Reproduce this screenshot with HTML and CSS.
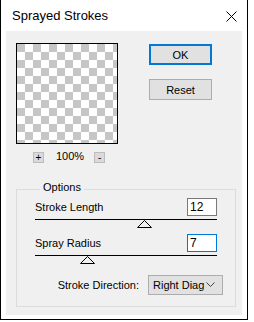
FILE: index.html
```html
<!DOCTYPE html>
<html lang="en">
<head>
    <meta charset="UTF-8">
    <title>Sprayed Strokes</title>
    <link rel="stylesheet" href="styles.css">
</head>
<body>
    <div class="dialog">
        <!-- Title bar -->
        <div class="titlebar">
            <span class="title">Sprayed Strokes</span>
            <svg class="close" width="11" height="11" viewBox="0 0 11 11">
                <path d="M0.5 0.5L10.5 10.5M10.5 0.5L0.5 10.5" stroke="#000" stroke-width="1" fill="none"/>
            </svg>
        </div>

        <div class="client">
            <div class="top">
                <!-- Preview with zoom controls -->
                <div class="preview-col">
                    <div class="preview"></div>
                    <div class="zoom">
                        <button class="zoom-btn">+</button>
                        <span class="zoom-level">100%</span>
                        <button class="zoom-btn">-</button>
                    </div>
                </div>

                <div class="actions">
                    <button class="btn btn-default">OK</button>
                    <button class="btn">Reset</button>
                </div>
            </div>

            <!-- Options group -->
            <fieldset class="options">
                <legend>Options</legend>

                <div class="field">
                    <label>Stroke Length</label>
                    <input class="num" type="text" value="12">
                </div>
                <div class="slider">
                    <svg class="thumb" style="margin-left: 102px" width="15" height="8" viewBox="0 0 15 8">
                        <path d="M7.5 0.5L14.5 7.5H0.5Z" fill="#f0f0f0" stroke="#000" stroke-width="1"/>
                    </svg>
                </div>

                <div class="field">
                    <label>Spray Radius</label>
                    <input class="num num-focus" type="text" value="7">
                </div>
                <div class="slider">
                    <svg class="thumb" style="margin-left: 45px" width="15" height="8" viewBox="0 0 15 8">
                        <path d="M7.5 0.5L14.5 7.5H0.5Z" fill="#f0f0f0" stroke="#000" stroke-width="1"/>
                    </svg>
                </div>

                <div class="field field-select">
                    <label>Stroke Direction:</label>
                    <div class="select">
                        <span>Right Diag</span>
                        <svg width="9" height="6" viewBox="0 0 9 6">
                            <path d="M0.5 0.5L4.5 4.5L8.5 0.5" stroke="#444" stroke-width="1" fill="none"/>
                        </svg>
                    </div>
                </div>
            </fieldset>
        </div>
    </div>
</body>
</html>
```

FILE: styles.css
```css
/* Page and dialog frame */
body {
    margin: 0;
    background-color: #fff;
    color: #000;
    font-family: "Liberation Sans", Arial, sans-serif;
    font-size: 11px;
}

.dialog {
    width: 248px;
    height: 320px;
    box-sizing: border-box;
    border: 1px solid #000;
    border-top: none;
    background-color: #fff;
    display: flex;
    flex-direction: column;
}

/* Title bar */
.titlebar {
    flex: none;
    height: 31px;
    display: flex;
    align-items: center;
    padding: 0 10px 0 11px;
}

.title {
    flex: 1;
    font-size: 13px;
}

.close {
    margin-top: 1px;
}

/* Grey client area */
.client {
    margin: 0 5px;
    height: 284px;
    background-color: #f0f0f0;
}

.top {
    display: flex;
    padding: 12px 0 0 10px;
}

/* Preview box with checkerboard */
.preview {
    width: 100px;
    height: 99px;
    border: 1px solid #000;
    background: conic-gradient(#fff 0 25%, #c6c6c6 0 50%, #fff 0 75%, #c6c6c6 0) 0 0 / 16px 16px;
}

.zoom {
    display: flex;
    align-items: center;
    margin-top: 8px;
    padding-left: 17px;
    height: 11px;
}

.zoom-btn {
    width: 11px;
    height: 11px;
    padding: 0;
    margin: 0;
    border: 1px solid #bcbcbc;
    background-color: #dadada;
    font-family: inherit;
    font-size: 10px;
    line-height: 9px;
    color: #000;
}

.zoom-level {
    line-height: 11px;
    margin: -3px 10px 0 12px;
}

/* OK / Reset */
.actions {
    display: flex;
    flex-direction: column;
    gap: 14px;
    margin: 1px 0 0 31px;
}

.btn {
    width: 63px;
    height: 21px;
    padding: 0;
    margin: 0;
    border: 1px solid #adadad;
    background-color: #e1e1e1;
    font-family: inherit;
    font-size: 11px;
    color: #000;
}

.btn-default {
    border: 2px solid #0078d7;
}

/* Options group */
.options {
    width: 220px;
    box-sizing: border-box;
    margin: 18px 0 0 10px;
    padding: 0 18px 11px 18px;
    border: 1px solid #dcdcdc;
    min-inline-size: 0;
}

.options legend {
    margin-left: 5px;
    padding: 0 3px 4px 3px;
    line-height: 13px;
}

.field {
    display: flex;
    align-items: center;
    justify-content: space-between;
    height: 18px;
}

.num {
    width: 30px;
    height: 18px;
    box-sizing: border-box;
    margin: 0;
    padding: 0 2px;
    border: 1px solid #7a7a7a;
    background-color: #fff;
    font-family: inherit;
    font-size: 12px;
    color: #000;
}

.num-focus {
    border-color: #0078d7;
}

.slider {
    margin: 3px 0 6px;
    border-top: 1px solid #000;
    height: 8px;
    display: flex;
}

.thumb {
    display: block;
}

/* Stroke direction dropdown */
.field-select {
    justify-content: flex-end;
    gap: 9px;
    height: 20px;
    margin: 11px -6px 0 0;
}

.select {
    width: 75px;
    height: 20px;
    box-sizing: border-box;
    border: 1px solid #adadad;
    background-color: #e1e1e1;
    display: flex;
    align-items: center;
    justify-content: space-between;
    padding: 0 7px 0 4px;
}
```
